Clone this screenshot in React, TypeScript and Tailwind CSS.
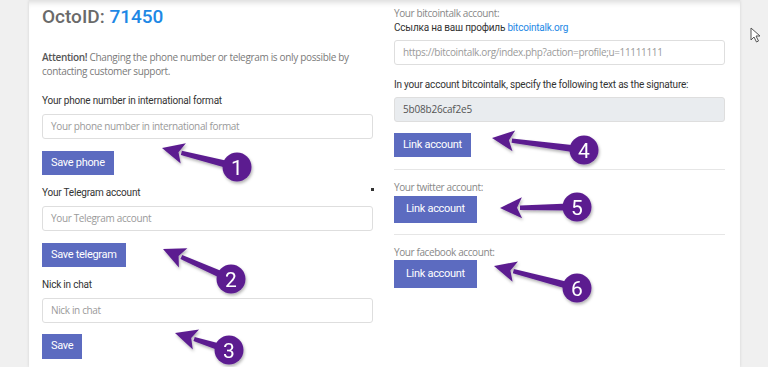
import React from 'react';

const roboto = { fontFamily: 'Roboto, "Liberation Sans", sans-serif' };

type Arrow = { tx: number; ty: number; cx: number; cy: number; n: string };

const arrows: Arrow[] = [
  { tx: 162, ty: 148, cx: 237, cy: 167, n: '1' },
  { tx: 163, ty: 249, cx: 231, cy: 279, n: '2' },
  { tx: 175, ty: 333, cx: 229, cy: 350, n: '3' },
  { tx: 492, ty: 138, cx: 584, cy: 150, n: '4' },
  { tx: 500, ty: 208, cx: 577, cy: 207, n: '5' },
  { tx: 494, ty: 266, cx: 577, cy: 288, n: '6' },
];

const PURPLE = '#5b1e90';

function ArrowMark({ a }: { a: Arrow }) {
  const dx = a.tx - a.cx;
  const dy = a.ty - a.cy;
  const len = Math.hypot(dx, dy);
  const ux = dx / len;
  const uy = dy / len;
  const px = -uy;
  const py = ux;
  const headLen = 22;
  const headHalf = 10.5;
  const bx = a.tx - ux * headLen;
  const by = a.ty - uy * headLen;
  const sx = a.cx + ux * 8;
  const sy = a.cy + uy * 8;
  const pt = (x: number, y: number) => `${x.toFixed(1)},${y.toFixed(1)}`;
  const shaft = [
    pt(sx + px * 3.5, sy + py * 3.5),
    pt(bx + ux * 2 + px * 2.2, by + uy * 2 + py * 2.2),
    pt(bx + ux * 2 - px * 2.2, by + uy * 2 - py * 2.2),
    pt(sx - px * 3.5, sy - py * 3.5),
  ].join(' ');
  const head = [
    pt(a.tx, a.ty),
    pt(bx + px * headHalf, by + py * headHalf),
    pt(bx + ux * 5, by + uy * 5),
    pt(bx - px * headHalf, by - py * headHalf),
  ].join(' ');
  return (
    <g filter="url(#sh)">
      <polygon points={shaft} fill={PURPLE} />
      <polygon points={head} fill={PURPLE} />
      <circle cx={a.cx} cy={a.cy} r={14.5} fill={PURPLE} />
      <text
        x={a.cx}
        y={a.cy + 7.5}
        textAnchor="middle"
        fontSize="21"
        fill="#ffffff"
        fontFamily="Roboto, 'Liberation Sans', sans-serif"
      >
        {a.n}
      </text>
    </g>
  );
}

function Label({ children, className = '' }: { children: React.ReactNode; className?: string }) {
  return (
    <div className={`whitespace-nowrap text-[10px] leading-[14px] tracking-[-0.2px] text-[#333] ${className}`} style={roboto}>
      {children}
    </div>
  );
}

function Muted({ children, className = '' }: { children: React.ReactNode; className?: string }) {
  return (
    <div className={`font-['Open_Sans',sans-serif] text-[10px] leading-[14px] tracking-[-0.4px] text-[#888] ${className}`}>
      {children}
    </div>
  );
}

function Field({ placeholder, className = '' }: { placeholder: string; className?: string }) {
  return (
    <div
      className={`flex h-[25px] items-center whitespace-nowrap rounded-[3px] border border-[#dedede] bg-white px-[8px] font-['Open_Sans',sans-serif] text-[10px] tracking-[-0.35px] text-[#9a9a9a] ${className}`}
    >
      {placeholder}
    </div>
  );
}

function Btn({ children, className = '' }: { children: React.ReactNode; className?: string }) {
  return (
    <div
      className={`flex w-fit items-center bg-[#5c6bc0] text-[11px] tracking-[-0.3px] text-white ${className}`}
      style={roboto}
    >
      {children}
    </div>
  );
}

export default function App() {
  return (
    <div className="relative h-[367px] w-[768px] overflow-hidden bg-[#f0f0f0]">
      <div className="ml-[29px] h-full w-[711px] bg-white shadow-[0_0_3px_rgba(0,0,0,0.12),inset_0_7px_6px_-5px_rgba(0,0,0,0.16)]">
        <div className="grid grid-cols-[331px_331px] gap-x-[21px] pl-[13px]">
          {/* left column */}
          <div className="pt-[5px]">
            <div className="text-[19px] font-medium leading-[24px] text-[#6a6a6a]" style={roboto}>
              OctoID: <span className="text-[#1e88e5]">71450</span>
            </div>
            <div className="mt-[21px] font-['Open_Sans',sans-serif] text-[10px] leading-[14px] tracking-[-0.33px] text-[#7a7a7a]">
              <span className="font-semibold text-[#555]">Attention!</span> Changing the phone number or telegram is only possible by
              <br />
              contacting customer support.
            </div>
            <Label className="mt-[16px]">Your phone number in international format</Label>
            <Field className="mt-[6px]" placeholder="Your phone number in international format" />
            <Btn className="mt-[12px] h-[24px] px-[9px]">Save phone</Btn>
            <Label className="mt-[11px]">Your Telegram account</Label>
            <Field className="mt-[6px]" placeholder="Your Telegram account" />
            <Btn className="mt-[12px] h-[24px] px-[9px]">Save telegram</Btn>
            <Label className="mt-[11px]">Nick in chat</Label>
            <Field className="mt-[6px]" placeholder="Nick in chat" />
            <Btn className="mt-[11px] h-[25px] px-[9px]">Save</Btn>
          </div>

          {/* right column */}
          <div className="pt-[6px]">
            <Muted>Your bitcointalk account:</Muted>
            <Label className="mt-[1px]">
              Ссылка на ваш профиль <span className="text-[#1e88e5]">bitcointalk.org</span>
            </Label>
            <Field className="mt-[5px]" placeholder="https://bitcointalk.org/index.php?action=profile;u=11111111" />
            <Label className="mt-[13px]">In your account bitcointalk, specify the following text as the signature:</Label>
            <div className="mt-[5px] flex h-[25px] items-center rounded-[3px] border border-[#dedede] bg-[#e9ecef] px-[8px] font-['Open_Sans',sans-serif] text-[10px] tracking-[-0.2px] text-[#555]">
              5b08b26caf2e5
            </div>
            <Btn className="mt-[11px] h-[24px] px-[9px]">Link account</Btn>
            <div className="mt-[12px] border-t border-[#e6e6e6]" />
            <Muted className="mt-[10px]">Your twitter account:</Muted>
            <Btn className="mt-[2px] h-[27px] px-[12px]">Link account</Btn>
            <div className="mt-[11px] border-t border-[#e6e6e6]" />
            <Muted className="mt-[10px]">Your facebook account:</Muted>
            <Btn className="mt-[1px] h-[28px] px-[12px]">Link account</Btn>
          </div>
        </div>
      </div>

      {/* stray dot */}
      <div className="absolute left-[371px] top-[188px] h-[3px] w-[3px] bg-[#333]" />

      {/* mouse cursor */}
      <svg className="absolute left-[750px] top-[27px]" width="12" height="16" viewBox="0 0 12 16">
        <path d="M1 1 L1 13 L4 10 L6.5 15 L8.5 14 L6 9 L10 9 Z" fill="#fff" stroke="#555" strokeWidth="1" strokeLinejoin="round" />
      </svg>

      {/* annotation arrows */}
      <svg className="pointer-events-none absolute inset-0" width="768" height="367">
        <defs>
          <filter id="sh" x="-20%" y="-20%" width="140%" height="160%">
            <feDropShadow dx="1" dy="2" stdDeviation="1.5" floodColor="#000" floodOpacity="0.3" />
          </filter>
        </defs>
        {arrows.map((a) => (
          <ArrowMark key={a.n} a={a} />
        ))}
      </svg>
    </div>
  );
}
